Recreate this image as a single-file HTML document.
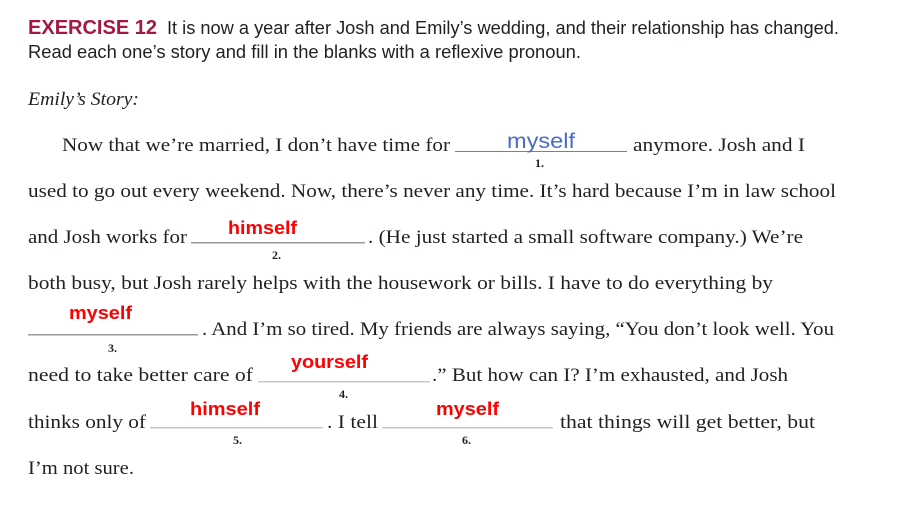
<!DOCTYPE html>
<html><head><meta charset="utf-8"><style>
html,body{margin:0;padding:0;background:#fff;width:916px;height:508px;overflow:hidden}
svg{display:block}
.s{font-family:"Liberation Serif",serif;font-size:19px;fill:#231f20}
.h{font-family:"Liberation Sans",sans-serif;font-size:18px;fill:#231f20}
.r{font-family:"Liberation Sans",sans-serif;font-weight:bold;font-size:18px;fill:#ff0000}
.n{font-family:"Liberation Serif",serif;font-weight:bold;font-size:12px;fill:#231f20}
</style></head><body>
<svg width="916" height="508" viewBox="0 0 916 508">
<text x="28" y="34" font-family="Liberation Sans,sans-serif" font-weight="bold" font-size="20" fill="#a3193f" textLength="129" lengthAdjust="spacingAndGlyphs">EXERCISE 12</text>
<text class="h" x="167" y="34" textLength="672" lengthAdjust="spacingAndGlyphs">It is now a year after Josh and Emily’s wedding, and their relationship has changed.</text>
<text class="h" x="28" y="58" textLength="553" lengthAdjust="spacingAndGlyphs">Read each one’s story and fill in the blanks with a reflexive pronoun.</text>
<text class="s" x="28" y="105" font-style="italic" textLength="111" lengthAdjust="spacingAndGlyphs">Emily’s Story:</text>

<text class="s" x="62" y="151" textLength="388" lengthAdjust="spacingAndGlyphs">Now that we’re married, I don’t have time for</text>
<rect x="455" y="151" width="172" height="1" fill="#808080"/>
<text x="507" y="148" font-family="Liberation Sans,sans-serif" font-size="21" fill="#4a6cc8" textLength="68" lengthAdjust="spacingAndGlyphs">myself</text>
<text class="n" x="535" y="167">1.</text>
<text class="s" x="633" y="151" textLength="172" lengthAdjust="spacingAndGlyphs">anymore. Josh and I</text>

<text class="s" x="28" y="197" textLength="808" lengthAdjust="spacingAndGlyphs">used to go out every weekend. Now, there’s never any time. It’s hard because I’m in law school</text>

<text class="s" x="28" y="243" textLength="159" lengthAdjust="spacingAndGlyphs">and Josh works for</text>
<rect x="191" y="242" width="174" height="1.5" fill="#999"/>
<text class="r" x="228" y="234" textLength="69" lengthAdjust="spacingAndGlyphs">himself</text>
<text class="n" x="272" y="259">2.</text>
<text class="s" x="368" y="243" textLength="435" lengthAdjust="spacingAndGlyphs">. (He just started a small software company.) We’re</text>

<text class="s" x="28" y="289" textLength="745" lengthAdjust="spacingAndGlyphs">both busy, but Josh rarely helps with the housework or bills. I have to do everything by</text>

<rect x="28" y="334" width="170" height="1.5" fill="#999"/>
<text class="r" x="69" y="319" textLength="63" lengthAdjust="spacingAndGlyphs">myself</text>
<text class="n" x="108" y="352">3.</text>
<text class="s" x="202" y="335" textLength="632" lengthAdjust="spacingAndGlyphs">. And I’m so tired. My friends are always saying, “You don’t look well. You</text>

<text class="s" x="28" y="381" textLength="225" lengthAdjust="spacingAndGlyphs">need to take better care of</text>
<rect x="258" y="381" width="172" height="1.5" fill="#c8c8c8"/>
<text class="r" x="291" y="368" textLength="77" lengthAdjust="spacingAndGlyphs">yourself</text>
<text class="n" x="339" y="398">4.</text>
<text class="s" x="432" y="381" textLength="356" lengthAdjust="spacingAndGlyphs">.” But how can I? I’m exhausted, and Josh</text>

<text class="s" x="28" y="428" textLength="118" lengthAdjust="spacingAndGlyphs">thinks only of</text>
<rect x="150" y="427" width="173" height="1.5" fill="#c8c8c8"/>
<text class="r" x="190" y="415" textLength="70" lengthAdjust="spacingAndGlyphs">himself</text>
<text class="n" x="233" y="444">5.</text>
<text class="s" x="327" y="428" textLength="51" lengthAdjust="spacingAndGlyphs">. I tell</text>
<rect x="382" y="427" width="171" height="1.5" fill="#c8c8c8"/>
<text class="r" x="436" y="415" textLength="63" lengthAdjust="spacingAndGlyphs">myself</text>
<text class="n" x="462" y="444">6.</text>
<text class="s" x="560" y="428" textLength="255" lengthAdjust="spacingAndGlyphs">that things will get better, but</text>

<text class="s" x="28" y="474" textLength="106" lengthAdjust="spacingAndGlyphs">I’m not sure.</text>
</svg>
</body></html>
